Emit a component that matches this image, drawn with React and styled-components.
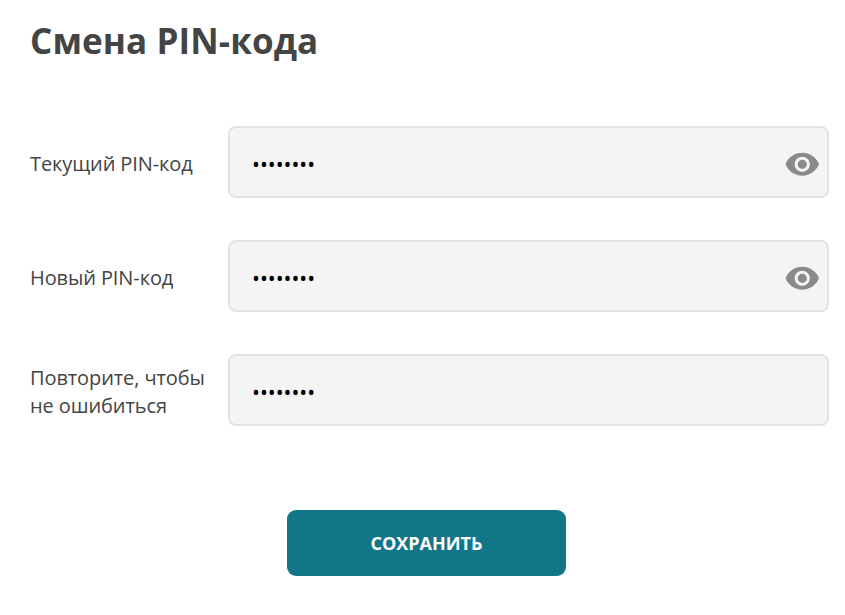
import React from 'react';
import { MdVisibility } from 'react-icons/md';
import styled, { createGlobalStyle } from 'styled-components';

const GlobalStyle = createGlobalStyle`
  html, body {
    margin: 0;
    padding: 0;
    background: #fff;
  }
  body {
    font-family: "Open Sans", "Noto Sans", sans-serif;
    color: #444;
  }
`;

const fields = [
  { id: 'current', label: 'Текущий PIN-код', eye: true },
  { id: 'next', label: 'Новый PIN-код', eye: true },
  { id: 'repeat', label: 'Повторите, чтобы не ошибиться', eye: false },
];

export default function App() {
  return (
    <>
      <GlobalStyle />
      <Page>
        <Title>Смена PIN-кода</Title>
        <Form onSubmit={(event) => event.preventDefault()}>
          {fields.map((field) => (
            <Row key={field.id}>
              <Label htmlFor={field.id}>{field.label}</Label>
              <InputWrap>
                <Input id={field.id} type="password" defaultValue="12345678" />
                {field.eye && (
                  <EyeButton type="button">
                    <MdVisibility size="36.5px" color="#8a8a8a" />
                  </EyeButton>
                )}
              </InputWrap>
            </Row>
          ))}
          <Actions>
            <SaveButton type="submit">Сохранить</SaveButton>
          </Actions>
        </Form>
      </Page>
    </>
  );
}

const Page = styled.div`
  box-sizing: border-box;
  width: 845px;
  height: 615px;
  padding: 18px 16px 0 30px;
  overflow: hidden;
`;

const Title = styled.h1`
  margin: 0;
  font-size: 35px;
  line-height: 46px;
  font-weight: 700;
  letter-spacing: 0.1px;
  color: #444;
`;

const Form = styled.form`
  display: flex;
  flex-direction: column;
  gap: 42px;
  margin-top: 62px;
`;

const Row = styled.div`
  display: grid;
  grid-template-columns: 198px 1fr;
  align-items: center;
`;

const Label = styled.label`
  padding-top: 3px;
  font-size: 20px;
  line-height: 28px;
  letter-spacing: -0.1px;
  color: #444;
  width: 180px;
`;

const InputWrap = styled.div`
  position: relative;
`;

const Input = styled.input`
  display: block;
  box-sizing: border-box;
  width: 100%;
  height: 72px;
  padding: 3px 60px 0 22px;
  border: 2px solid #e2e2e2;
  border-radius: 8px;
  background: #f4f4f4;
  font-family: "Open Sans", sans-serif;
  font-size: 21px;
  color: #000;
  outline: none;
`;

const EyeButton = styled.button`
  position: absolute;
  top: 20px;
  right: 9px;
  display: flex;
  padding: 0;
  border: none;
  background: none;
`;

const Actions = styled.div`
  display: flex;
  justify-content: center;
  margin-top: 42px;
  padding-right: 6px;
`;

const SaveButton = styled.button`
  width: 279px;
  height: 66px;
  border: none;
  border-radius: 9px;
  background: #117687;
  color: #fff;
  font-family: "Open Sans", sans-serif;
  font-size: 18px;
  font-weight: 700;
  text-transform: uppercase;
`;
